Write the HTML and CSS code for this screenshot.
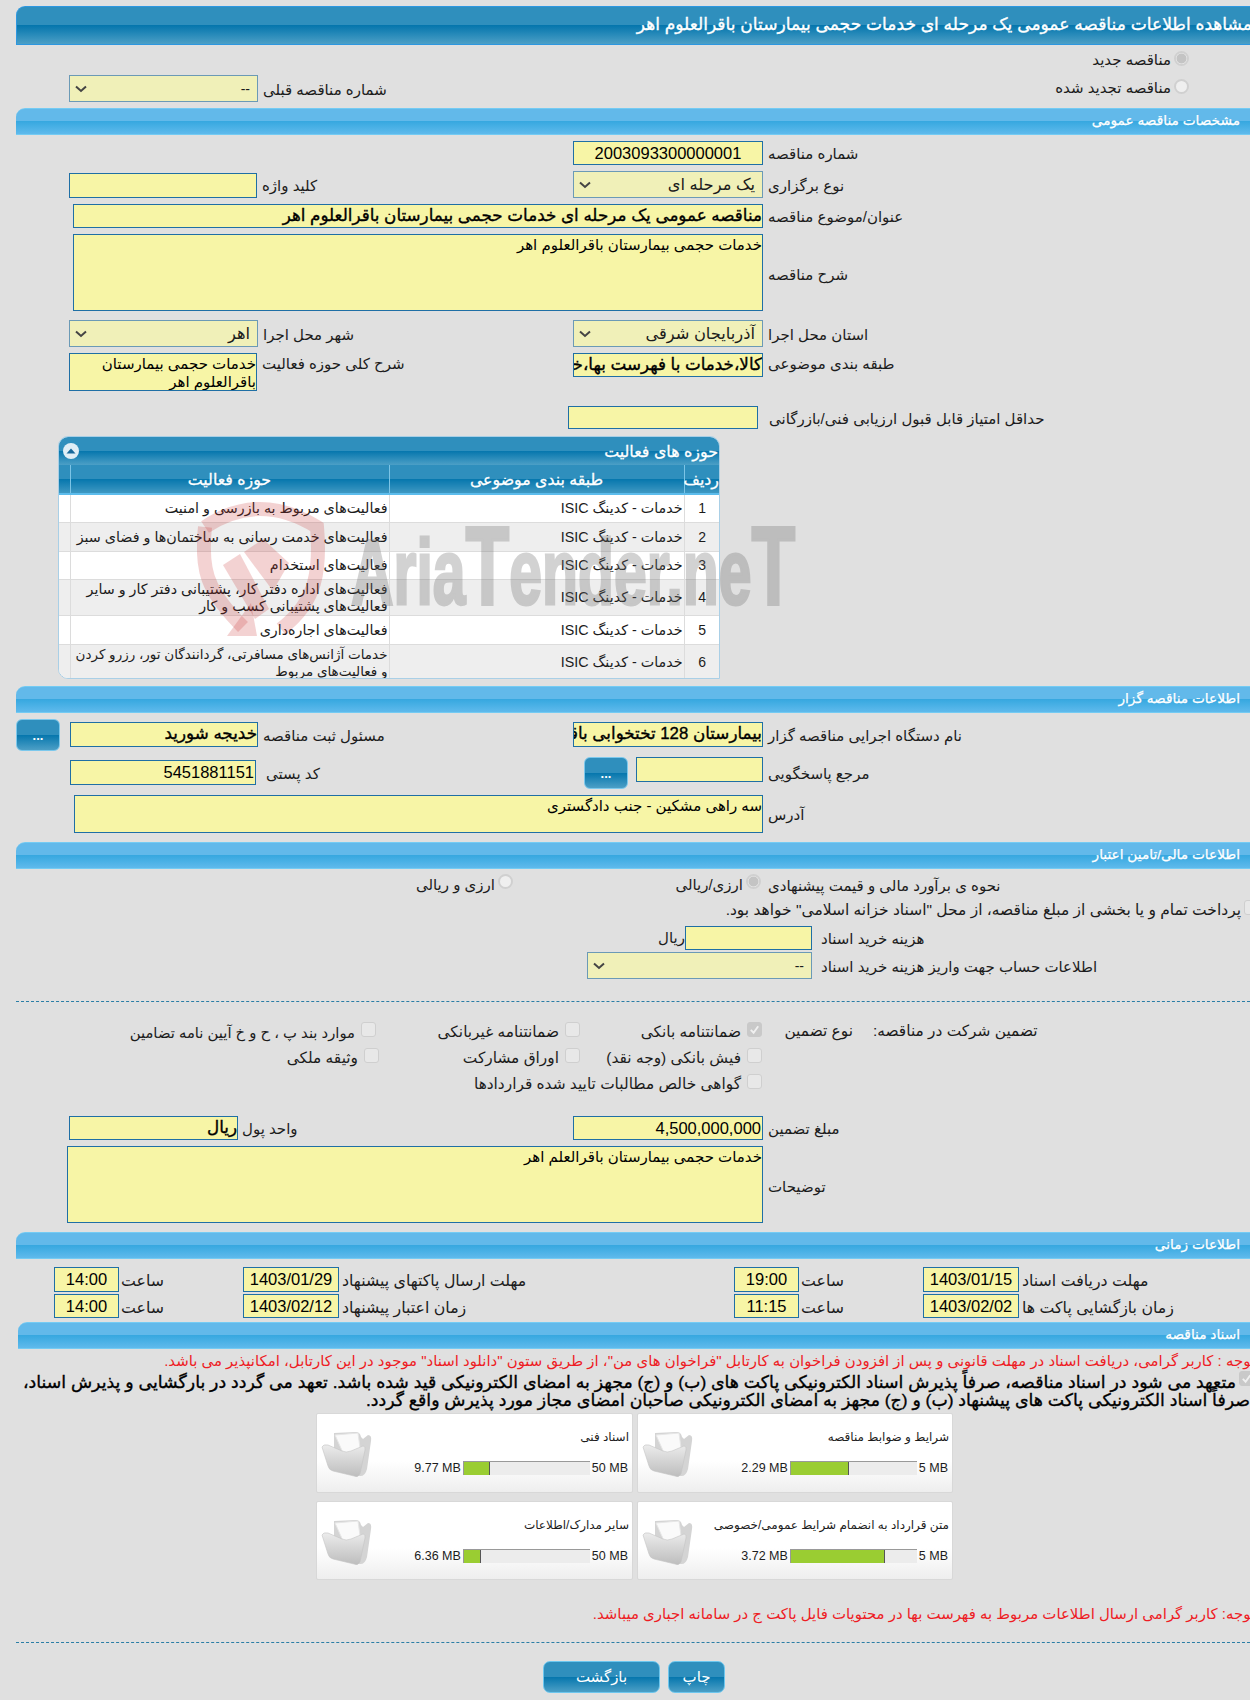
FILE: index.html
```html
<!DOCTYPE html>
<html lang="fa">
<head>
<meta charset="utf-8">
<title>مشاهده اطلاعات مناقصه</title>
<link rel="stylesheet" href="styles.css">
</head>
<body>
<div class="page">
  <div class="bar-dark title-bar"><span>مشاهده اطلاعات مناقصه عمومی یک مرحله ای خدمات حجمی بیمارستان باقرالعلوم اهر</span></div>

  <div class="radio-new">
    <span class="txt">مناقصه جدید</span><i class="radio on"></i>
  </div>
  <div class="row mt6">
    <div class="field"><div class="sel w189"><svg class="chev" viewBox="0 0 12 8"><path d="M1 1.500 6 6l5-4.500" /></svg><span>--</span></div><span class="lbl">شماره مناقصه قبلی</span></div>
    <div class="radio-renew"><span class="txt">مناقصه تجدید شده</span><i class="radio"></i></div>
  </div>

  <div class="bar-light mt6">مشخصات مناقصه عمومی</div>

  <div class="row mt6">
    <div></div>
    <div class="field"><div class="in w190 h24 center">2003093300000001</div><span class="lbl">شماره مناقصه</span></div>
  </div>
  <div class="row mt6">
    <div class="field top1"><div class="in w188 h25"></div><span class="lbl">کلید واژه</span></div>
    <div class="field"><div class="sel w190"><svg class="chev" viewBox="0 0 12 8"><path d="M1 1.500 6 6l5-4.500" /></svg><span class="big">یک مرحله ای</span></div><span class="lbl">نوع برگزاری</span></div>
  </div>
  <div class="wide-row mt6 pl57">
    <div class="in w690 h24 bold">مناقصه عمومی یک مرحله ای خدمات حجمی بیمارستان باقرالعلوم اهر</div><span class="lbl">عنوان/موضوع مناقصه</span>
  </div>
  <div class="wide-row mt6 pl57">
    <div class="in ta w690 h77">خدمات حجمی بیمارستان باقرالعلوم اهر</div><span class="lbl low">شرح مناقصه</span>
  </div>
  <div class="row mt9">
    <div class="field"><div class="sel w189"><svg class="chev" viewBox="0 0 12 8"><path d="M1 1.500 6 6l5-4.500" /></svg><span class="big">اهر</span></div><span class="lbl">شهر محل اجرا</span></div>
    <div class="field"><div class="sel w190"><svg class="chev" viewBox="0 0 12 8"><path d="M1 1.500 6 6l5-4.500" /></svg><span class="big">آذربایجان شرقی</span></div><span class="lbl">استان محل اجرا</span></div>
  </div>
  <div class="row mt6">
    <div class="field start"><div class="in ta w188 h38 wrap">خدمات حجمی بیمارستان باقرالعلوم اهر</div><span class="lbl">شرح کلی حوزه فعالیت</span></div>
    <div class="field start"><div class="in w190 h24 bold">کالا،خدمات با فهرست بها،خدمات</div><span class="lbl">طبقه بندی موضوعی</span></div>
  </div>
  <div class="row mt15 shift5">
    <div></div>
    <div class="field"><div class="in w190 h23"></div><span class="lbl gap11">حداقل امتیاز قابل قبول ارزیابی فنی/بازرگانی</span></div>
  </div>

  <div class="act">
    <div class="act-title bar-grad"><i class="collapse"><svg viewBox="0 0 16 16"><path d="M3.500 10.500h9L8 5.500z"/></svg></i><span>حوزه های فعالیت</span></div>
    <table class="act-table" dir="rtl">
      <colgroup><col class="c1"><col class="c2"><col class="c3"><col class="c4"></colgroup>
      <thead>
        <tr><th>ردیف</th><th>طبقه بندی موضوعی</th><th>حوزه فعالیت</th><th></th></tr>
      </thead>
      <tbody>
        <tr class="h28"><td class="num">1</td><td>خدمات - کدینگ ISIC</td><td>فعالیت‌های مربوط به بازرسی و امنیت</td><td></td></tr>
        <tr class="alt h29"><td class="num">2</td><td>خدمات - کدینگ ISIC</td><td>فعالیت‌های خدمت رسانی به ساختمان‌ها و فضای سبز</td><td></td></tr>
        <tr class="h28"><td class="num">3</td><td>خدمات - کدینگ ISIC</td><td>فعالیت‌های استخدام</td><td></td></tr>
        <tr class="alt h35"><td class="num">4</td><td>خدمات - کدینگ ISIC</td><td>فعالیت‌های  اداره دفتر کار، پشتیبانی دفتر کار و سایر<br>فعالیت‌های پشتیبانی کسب و کار</td><td></td></tr>
        <tr class="h29"><td class="num">5</td><td>خدمات - کدینگ ISIC</td><td>فعالیت‌های اجاره‌داری</td><td></td></tr>
        <tr class="alt h35"><td class="num">6</td><td>خدمات - کدینگ ISIC</td><td class="tight">خدمات آژانس‌های مسافرتی، گردانندگان تور، رزرو کردن<br>و فعالیت‌های مربوط</td><td></td></tr>
      </tbody>
    </table>
  </div>

  <div class="bar-light mt7">اطلاعات مناقصه گزار</div>

  <div class="org-row mt9">
    <button class="btn-dots" type="button">...</button>
    <div class="field org-left"><div class="in w188 h25 bold">خدیجه شورید</div><span class="lbl">مسئول ثبت مناقصه</span></div>
    <div class="field"><div class="in w190 h25 bold">بیمارستان 128 تختخوابی باقرالعلوم اهر</div><span class="lbl">نام دستگاه اجرایی مناقصه گزار</span></div>
  </div>
  <div class="ref-row mt10">
    <div class="field top3"><div class="in w186 h25 digits">5451881151</div><span class="lbl gap10">کد پستی</span></div>
    <div class="ref-right">
      <button class="btn-dots" type="button">...</button>
      <div class="field start"><div class="in w127 h25"></div><span class="lbl ref-lbl">مرجع پاسخگویی</span></div>
    </div>
  </div>
  <div class="wide-row mt6 pl58">
    <div class="in ta w689 h38">سه راهی مشکین - جنب دادگستری</div><span class="lbl">آدرس</span>
  </div>

  <div class="bar-light mt9">اطلاعات مالی/تامین اعتبار</div>

  <div class="fin-row mt5">
    <div class="rad-item"><span class="txt">ارزی و ریالی</span><i class="radio up"></i></div>
    <div class="rad-item"><span class="txt">ارزی/ریالی</span><i class="radio on up"></i></div>
    <span class="lbl">نحوه ی برآورد مالی و قیمت پیشنهادی</span>
  </div>
  <div class="pay-row mt6">
    <span class="txt">پرداخت تمام و یا بخشی از مبلغ مناقصه، از محل "اسناد خزانه اسلامی" خواهد بود.</span><i class="cb up"></i>
  </div>
  <div class="cost-row mt6">
    <span class="txt">ریال</span>
    <div class="field"><div class="in w127 h24"></div><span class="lbl gap9">هزینه خرید اسناد</span></div>
  </div>
  <div class="acc-row mt2">
    <div class="sel w225"><svg class="chev" viewBox="0 0 12 8"><path d="M1 1.500 6 6l5-4.500" /></svg><span>--</span></div><span class="lbl gap9">اطلاعات حساب جهت واریز هزینه خرید اسناد</span>
  </div>

  <div class="dash mt22"></div>

  <div class="gua mt17">
    <div class="gc"><span class="txt small-line">موارد بند پ ، ح و خ آیین نامه تضامین</span><i class="cb up"></i></div>
    <div class="gc"><span class="txt">ضمانتنامه غیربانکی</span><i class="cb up"></i></div>
    <div class="gc"><span class="txt">ضمانتنامه بانکی</span><i class="cb checked up"><svg viewBox="0 0 14 14"><path d="M3 7.500 6 10.500 11 3.500"/></svg></i></div>
    <span class="txt c-d">نوع تضمین</span>
    <span class="txt c-e">تضمین شرکت در مناقصه:</span>

    <div class="gc shift3"><span class="txt">وثیقه ملکی</span><i class="cb up"></i></div>
    <div class="gc"><span class="txt">اوراق مشارکت</span><i class="cb up"></i></div>
    <div class="gc"><span class="txt">فیش بانکی (وجه نقد)</span><i class="cb up"></i></div>
    <span></span><span></span>

    <div class="gc span-l"><span class="txt">گواهی خالص مطالبات تایید شده قراردادها</span><i class="cb up"></i></div>
  </div>

  <div class="row mt19">
    <div class="field"><div class="in w169 h24 bold">ریال</div><span class="lbl gap4">واحد پول</span></div>
    <div class="field"><div class="in w190 h24 digits">4,500,000,000</div><span class="lbl">مبلغ تضمین</span></div>
  </div>
  <div class="wide-row mt6 pl51">
    <div class="in ta w696 h77">خدمات حجمی بیمارستان باقرالعلم اهر</div><span class="lbl low">توضیحات</span>
  </div>

  <div class="bar-light mt9">اطلاعات زمانی</div>

  <div class="times mt8 h25r">
    <div class="field"><div class="in w65 h25 center digits">14:00</div><span class="lbl gap2">ساعت</span></div>
    <div class="field"><div class="in w96 h25 center digits">1403/01/29</div><span class="lbl gap3">مهلت ارسال پاکتهای پیشنهاد</span></div>
    <div class="field"><div class="in w65 h25 center digits">19:00</div><span class="lbl gap2">ساعت</span></div>
    <div class="field"><div class="in w96 h25 center digits">1403/01/15</div><span class="lbl gap3">مهلت دریافت اسناد</span></div>
  </div>
  <div class="times mt2">
    <div class="field"><div class="in w65 h24 center digits">14:00</div><span class="lbl gap2">ساعت</span></div>
    <div class="field"><div class="in w96 h24 center digits">1403/02/12</div><span class="lbl gap3">زمان اعتبار پیشنهاد</span></div>
    <div class="field"><div class="in w65 h24 center digits">11:15</div><span class="lbl gap2">ساعت</span></div>
    <div class="field"><div class="in w96 h24 center digits">1403/02/02</div><span class="lbl gap3">زمان بازگشایی پاکت ها</span></div>
  </div>

  <div class="bar-light bar-docs mt4">اسناد مناقصه</div>

  <div class="note note-1"><span>توجه : کاربر گرامی، دریافت اسناد در مهلت قانونی و پس از افزودن فراخوان به کارتابل "فراخوان های من"، از طریق ستون "دانلود اسناد" موجود در این کارتابل، امکانپذیر می باشد.</span></div>
  <div class="commit">
    <div class="commit-1"><span>متعهد می شود در اسناد مناقصه، صرفاً پذیرش اسناد الکترونیکی پاکت های (ب) و (ج) مجهز به امضای الکترونیکی قید شده باشد. تعهد می گردد در بارگشایی و پذیرش اسناد،</span><i class="cb checked up"><svg viewBox="0 0 14 14"><path d="M3 7.500 6 10.500 11 3.500"/></svg></i></div>
    <div class="commit-2"><span>صرفاً اسناد الکترونیکی پاکت های پیشنهاد (ب) و (ج) مجهز به امضای الکترونیکی صاحبان امضای مجاز مورد پذیرش واقع گردد.</span></div>
  </div>

  <div class="cards">
    <div class="card">
      <svg class="folder" viewBox="0 0 52 50"><use href="#folder-art"/></svg>
      <div class="cbody"><div class="ctitle">اسناد فنی</div><div class="cbar"><span class="val">9.77 MB</span><div class="track"><div class="fill" style="width:20.500%"></div></div><span class="max">50 MB</span></div></div>
    </div>
    <div class="card">
      <svg class="folder" viewBox="0 0 52 50"><use href="#folder-art"/></svg>
      <div class="cbody"><div class="ctitle">شرایط و ضوابط مناقصه</div><div class="cbar"><span class="val">2.29 MB</span><div class="track"><div class="fill" style="width:45.800%"></div></div><span class="max">5 MB</span></div></div>
    </div>
    <div class="card">
      <svg class="folder" viewBox="0 0 52 50"><use href="#folder-art"/></svg>
      <div class="cbody"><div class="ctitle">سایر مدارک/اطلاعات</div><div class="cbar"><span class="val">6.36 MB</span><div class="track"><div class="fill" style="width:13.500%"></div></div><span class="max">50 MB</span></div></div>
    </div>
    <div class="card">
      <svg class="folder" viewBox="0 0 52 50"><use href="#folder-art"/></svg>
      <div class="cbody"><div class="ctitle">متن قرارداد به انضمام شرایط عمومی/خصوصی</div><div class="cbar"><span class="val">3.72 MB</span><div class="track"><div class="fill" style="width:74.400%"></div></div><span class="max">5 MB</span></div></div>
    </div>
  </div>

  <div class="note note-2"><span>توجه: کاربر گرامی ارسال اطلاعات مربوط به فهرست بها در محتویات فایل پاکت ج در سامانه اجباری میباشد.</span></div>

  <div class="dash mt19"></div>

  <div class="actions">
    <button class="btn back" type="button">بازگشت</button>
    <button class="btn print" type="button">چاپ</button>
  </div>

  <svg class="wm-shield" viewBox="0 0 130 140">
    <path class="wm-stroke" d="M8 28Q62-8 120 28 123 62 117 84 110 110 84 130"/>
    <path class="wm-stroke" d="M8 28Q4 66 14 86 22 104 46 128"/>
    <path class="wm-fill" d="M30 137 60 137 54 104z"/>
    <path class="wm-fill" d="M26 66 43 55 72 110 58 120z"/>
    <path class="wm-fill" d="M47 53 66 40 92 64 76 92z"/>
  </svg>
  <div class="wm-text">Aria<span class="wm-t">T</span>ender.ne<span class="wm-t">T</span></div>

  <svg class="defs" width="0" height="0">
    <defs>
      <linearGradient id="fg" x1="0" y1="0" x2="0" y2="1"><stop offset="0" stop-color="#ececec"/><stop offset="1" stop-color="#bdbdbd"/></linearGradient>
      <g id="folder-art">
        <path d="M14 4 36 3Q40 3 41 8L43 10 48 6Q52 6 51 12L47 40Q45 48 39 47L34 44 14 26z" fill="#d4d4d4"/>
        <path d="M15 6 38 4 41 26 24 26z" fill="#fafafa" stroke="#e6e6e6"/>
        <path d="M2 18Q3 15 8 16L22 22Q26 24 31 22L43 17Q46 17 45 21L40 45Q38 49 34 47L13 42Q9 41 8 37z" fill="url(#fg)" stroke="#c4c4c4" stroke-width=".6"/>
      </g>
    </defs>
  </svg>
</div>
</body>
</html>
```
FILE: styles.css
```css
* { box-sizing: border-box; }
html { background: #fff; }
body { margin: 0; }
.page {
  position: relative;
  width: 1250px;
  height: 1700px;
  overflow: hidden;
  padding: 6px 0 0 16px;
  background: #e0e0e0;
  font-family: "Liberation Sans", "DejaVu Sans", sans-serif;
  font-size: 15px;
  color: #1c1c1c;
}
.mt2 { margin-top: 2px; } .mt4 { margin-top: 4px; } .mt5 { margin-top: 5px; } .mt6 { margin-top: 6px; } .mt7 { margin-top: 7px; }
.mt8 { margin-top: 8px; } .mt9 { margin-top: 9px; } .mt10 { margin-top: 10px; } .mt15 { margin-top: 15px; } .mt17 { margin-top: 17px; } .mt19 { margin-top: 19px; } .mt22 { margin-top: 22px; }

/* header bars */
.bar-dark, .bar-grad, .btn, .btn-dots {
  background: linear-gradient(#2f8fbd 0, #2f8fbd 49%, #0576ad 50%, #4c9fc6 100%);
}
.title-bar {
  width: 1234px;
  height: 39px;
  border: 1px solid #2d97e0;
  border-right: 0;
  border-radius: 9px 0 0 0;
  color: #fff;
  font-size: 17.100px;
  -webkit-text-stroke: .35px #fff;
  line-height: 35px;
  direction: rtl;
  white-space: nowrap;
  overflow: hidden;
}
.title-bar span { display: inline-block; margin-right: -2px; }
.bar-light {
  width: 1234px;
  height: 27px;
  border-top: 1px solid #74cbf3;
  border-bottom: 1px solid #74cbf3;
  border-radius: 9px 0 0 0;
  background: linear-gradient(#62b9ea 0, #62b9ea 49%, #37a8e0 50%, #5fbaec 100%);
  color: #fff;
  font-size: 13.700px;
  -webkit-text-stroke: .25px #fff;
  line-height: 24px;
  direction: rtl;
  padding-right: 10px;
}
.bar-docs { margin-left: 2px; width: 1232px; }

/* rows */
.row { display: grid; grid-template-columns: 504px 1fr; padding-left: 53px; }
.shift5 { grid-template-columns: 499px 1fr; }
.wide-row { display: flex; align-items: center; }
.pl51 { padding-left: 51px; } .pl57 { padding-left: 57px; } .pl58 { padding-left: 58px; }
.field { display: flex; align-items: center; }
.start { align-items: flex-start; }
.top1 { margin-top: 1px; }
.top3 { margin-top: 3px; align-self: start; }
.lbl { margin-left: 5px; direction: rtl; white-space: nowrap; padding-top: 2px; }
.low { padding-top: 4px; }
.gap2 { margin-left: 2px; } .gap3 { margin-left: 3px; } .gap4 { margin-left: 4px; } .gap9 { margin-left: 9px; } .gap10 { margin-left: 10px; } .gap11 { margin-left: 11px; }
.txt { direction: rtl; white-space: nowrap; }
.small-line { font-size: 14.800px; }

/* form controls */
.in {
  flex: none;
  border: 1px solid #1f6fa5;
  background: #f7f5a6;
  color: #000;
  direction: rtl;
  overflow: hidden;
  white-space: nowrap;
  font-size: 14.300px;
  line-height: 22px;
}
.ta { line-height: 18px; padding-top: 1px; font-size: 15px; }
.wrap { white-space: normal; }
.bold { font-size: 16.750px; -webkit-text-stroke: .35px #000; }
.digits { font-size: 16.500px; padding-right: 1px; }
.center { text-align: center; font-size: 16.500px; direction: ltr; padding-right: 0; }
.w65 { width: 65px; } .w96 { width: 96px; } .w127 { width: 127px; } .w169 { width: 169px; } .w186 { width: 186px; } .w188 { width: 188px; }
.w189 { width: 189px; } .w190 { width: 190px; } .w225 { width: 225px; } .w689 { width: 689px; } .w690 { width: 690px; } .w696 { width: 696px; }
.h23 { height: 23px; } .h24 { height: 24px; } .h25 { height: 25px; } .h38 { height: 38px; } .h77 { height: 77px; }
.sel {
  flex: none;
  height: 27px;
  display: flex;
  align-items: center;
  justify-content: space-between;
  padding: 0 7px 0 5px;
  border: 1px solid #6b9ab6;
  background: #f0f0b8;
  direction: ltr;
  white-space: nowrap;
  font-size: 14px;
}
.sel .big { direction: rtl; font-size: 16.300px; }
.chev { width: 12px; height: 8px; fill: none; stroke: #444; stroke-width: 2; }
.radio {
  flex: none;
  display: block;
  width: 15px;
  height: 15px;
  border: 2px solid #d0d0d0;
  border-radius: 50%;
  background: #efefef;
}
.radio.on { background: radial-gradient(circle, #c4c4c4 0 4.500px, #efefef 5.500px); }
.cb {
  flex: none;
  display: block;
  width: 15px;
  height: 15px;
  border: 1px solid #cfcfcf;
  border-radius: 3px;
  background: #e8e8e8;
}
.cb.checked { background: #c9c9c9; border-color: #c9c9c9; }
.cb svg { display: block; fill: none; stroke: #f0f0f0; stroke-width: 2; }
.up { margin-bottom: 6px; }

.radio-new { display: flex; justify-content: flex-end; align-items: center; gap: 3px; height: 19px; margin-top: 5px; padding-right: 61px; }
.radio-renew { display: flex; justify-content: flex-end; align-items: flex-start; gap: 3px; margin-top: 4px; padding-right: 61px; }
.radio-new .radio { margin-bottom: 2px; }

/* activity table */
.act {
  width: 662px;
  height: 243px;
  margin: 7px 0 0 42px;
  overflow: hidden;
  border: 1px solid #a9cfe6;
  border-radius: 10px 10px 0 10px;
  background: #fff;
}
.act-title {
  height: 28px;
  display: flex;
  align-items: center;
  justify-content: space-between;
  padding: 0 1px 0 4px;
  color: #fff;
  font-size: 15.900px;
  -webkit-text-stroke: .3px #fff;
  direction: ltr;
}
.act-title span { direction: rtl; }
.collapse { display: block; width: 16px; height: 16px; border-radius: 50%; background: #dfeef6; -webkit-text-stroke: 0; }
.collapse svg { display: block; fill: #17689b; }
.act-table { width: 660px; table-layout: fixed; border-collapse: collapse; font-size: 14.300px; }
.c1 { width: 35px; } .c2 { width: 295px; } .c3 { width: 319px; } .c4 { width: 11px; }
.act-table th {
  height: 29px;
  padding: 0;
  border-left: 1px solid #7cc4e6;
  border-bottom: 2px solid #5cbcec;
  background: linear-gradient(#2f8fbd 0, #2f8fbd 49%, #0576ad 50%, #3f98c2 100%);
  color: #fff;
  font-size: 15.800px;
  font-weight: normal;
  -webkit-text-stroke: .3px #fff;
}
.act-table th:last-child { border-left: 0; }
.act-table td {
  padding: 1px 1px 0 2px;
  border-left: 1px solid #dcdcdc;
  border-bottom: 1px solid #dcdcdc;
  line-height: 17px;
  white-space: nowrap;
}
.act-table td:last-child { border-left: 0; }
.act-table .num { text-align: center; font-size: 14px; }
.act-table .tight { font-size: 13.500px; }
.alt td { background: #eeeeee; }
.h28 { height: 28px; } .h29 { height: 29px; } .h35 { height: 35px; }

/* organiser */
.org-row { display: flex; height: 25px; }
.org-left { width: 503px; }
.btn-dots {
  flex: none;
  width: 44px;
  height: 32px;
  margin: -3px 10px 0 0;
  padding: 0;
  border: 1px solid #7cc8ec;
  border-radius: 6px;
  color: #fff;
  font: bold 13px "Liberation Sans", sans-serif;
}
.ref-row { display: grid; grid-template-columns: 514px 1fr; padding-left: 54px; height: 32px; }
.ref-right { display: flex; }
.ref-right .btn-dots { margin: 0 8px 0 0; }
.ref-lbl { margin-top: 6px; }

/* finance */
.fin-row { display: grid; grid-template-columns: 497px 248px auto; height: 20px; align-items: center; }
.rad-item { display: flex; justify-content: flex-end; align-items: center; gap: 3px; }
.fin-row .lbl { margin-left: 7px; justify-self: start; }
.pay-row { display: flex; justify-content: flex-end; align-items: center; gap: 3px; height: 20px; margin-right: -9px; }
.pay-row .txt { font-size: 15.500px; }
.cost-row { display: grid; grid-template-columns: 669px auto; align-items: center; }
.cost-row > .txt { justify-self: end; }
.acc-row { display: flex; align-items: center; padding-left: 571px; }
.dash { width: 1234px; border-top: 1px dashed #2b7ea6; }

/* guarantee */
.gua { display: grid; grid-template-columns: 360px 204px 182px 91px auto; grid-auto-rows: 26px; font-size: 15.400px; }
.gc { display: flex; justify-content: flex-end; align-items: center; gap: 6px; }
.shift3 { margin-right: -3px; }
.span-l { grid-column: 1 / 4; }
.c-d, .c-e { padding-top: 3px; }
.c-d { justify-self: end; }
.c-e { justify-self: start; padding-left: 20px; }

/* times */
.times { display: grid; grid-template-columns: 189px 491px 189px 1fr; padding-left: 38px; }
.times .lbl { font-size: 15.800px; }

/* notes */
.note { direction: rtl; white-space: nowrap; color: #ee1c25; height: 18px; line-height: 18px; font-size: 14.930px; }
.note-1 { margin-top: 3px; margin-right: -5px; }
.commit { margin-top: 3px; font-size: 17.350px; -webkit-text-stroke: .35px #000; color: #000; line-height: 18px; white-space: nowrap; }
.commit-1 { display: flex; justify-content: flex-end; gap: 3px; direction: ltr; }
.commit-1 span { direction: rtl; }
.commit-1 .cb { margin: -2px -4px 0 0; -webkit-text-stroke: 0; }
.commit-2 { direction: rtl; }

/* cards */
.cards { display: grid; grid-template-columns: 317px 316px; gap: 8px 4px; margin: 4px 0 0 300px; }
.card {
  display: flex;
  height: 80px;
  border: 1px solid #d8d8d8;
  border-radius: 2px;
  background: linear-gradient(#fff 0, #fff 60%, #eee 100%);
}
.card:nth-child(n+3) { height: 79px; }
.folder { flex: none; width: 52px; height: 50px; margin: 15px 0 0 3px; }
.cbody { flex: 1; }
.ctitle { margin-top: 14px; height: 18px; padding-right: 3px; direction: rtl; font-size: 12px; line-height: 18px; white-space: nowrap; }
.cbar { display: flex; justify-content: flex-end; align-items: center; margin-top: 15px; padding-right: 4px; font-size: 12.500px; }
.val { margin-right: 2px; white-space: nowrap; }
.max { margin-left: 2px; white-space: nowrap; }
.track { width: 127px; height: 14px; border-top: 1px solid #999; border-left: 1px solid #999; background: #ececec; }
.fill { height: 13px; background: #9acd32; border-right: 1px solid #555; }

.note-2 { margin: 25px -5px 0 0; }

/* buttons */
.actions { display: flex; gap: 8px; margin: 18px 0 0 527px; }
.btn {
  height: 32px;
  padding: 0;
  border: 1px solid #6cc6ee;
  border-radius: 7px;
  color: #fff;
  font: 15px "Liberation Sans", "DejaVu Sans", sans-serif;
  direction: rtl;
}
.back { width: 117px; }
.print { width: 57px; }

/* watermark */
.wm-shield { position: absolute; left: 197px; top: 499px; width: 130px; height: 140px; pointer-events: none; }
.wm-stroke { fill: none; stroke: rgba(200, 50, 50, .22); stroke-width: 14; }
.wm-fill { fill: rgba(200, 50, 50, .22); }
.wm-text {
  position: absolute;
  left: 351px;
  top: 501px;
  font: bold 92px "Liberation Sans", sans-serif;
  color: #6e6e6e;
  -webkit-text-stroke: 3px #6e6e6e;
  opacity: .3;
  transform: scaleX(.64);
  transform-origin: left top;
  white-space: nowrap;
  pointer-events: none;
}
.wm-t { font-size: 112px; }
.defs { position: absolute; }
```
